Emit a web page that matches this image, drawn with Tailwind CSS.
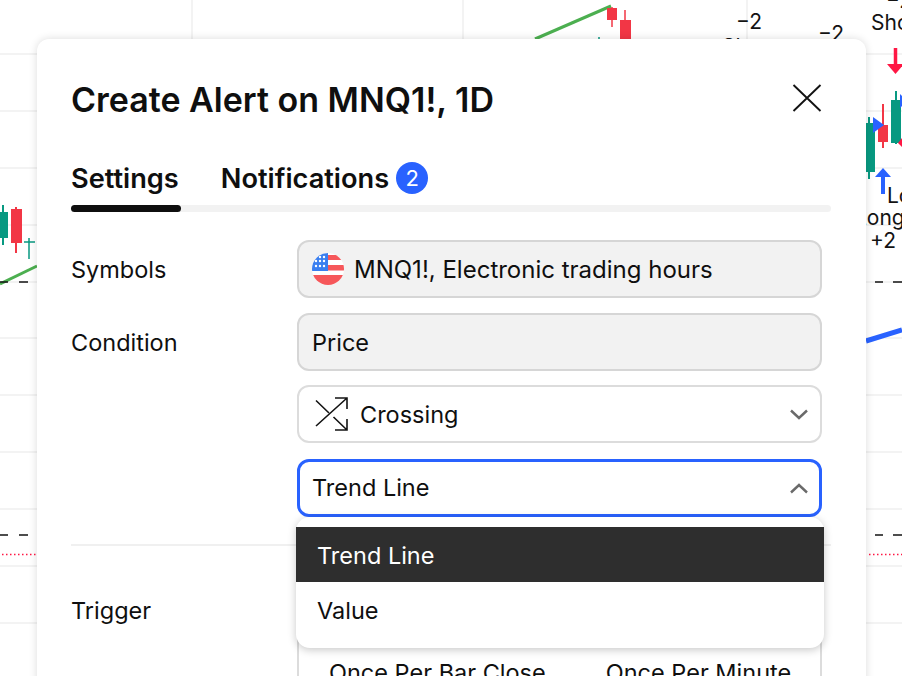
<!DOCTYPE html>
<html lang="en">
<head>
    <meta charset="UTF-8">
    <meta name="viewport" content="width=device-width, initial-scale=1.0">
    <title>Create Alert</title>
    <script src="https://cdn.jsdelivr.net/npm/@tailwindcss/browser@4"></script>
</head>
<body class="bg-white font-['Inter',sans-serif] text-[#0f0f0f]">
    <div class="relative w-[902px] h-[676px] overflow-hidden bg-white">

        <!-- Chart behind the dialog -->
        <svg class="absolute inset-0" width="902" height="676" viewBox="0 0 902 676" fill="none">
            <g stroke="#f0f0f0" stroke-width="1.5">
                <path d="M0 54H902M0 111H902M0 168H902M0 225H902M0 282H902M0 338H902M0 395H902M0 452H902M0 509H902M0 566H902M0 623H902"/>
                <path d="M192 0V54M463 0V54M747 0V54"/>
            </g>
            <!-- left candles -->
            <path d="M3 205V245" stroke="#089981" stroke-width="2"/>
            <rect x="0" y="212" width="8" height="26" fill="#089981"/>
            <path d="M16 207V253" stroke="#f23645" stroke-width="2"/>
            <rect x="11" y="209" width="11" height="34" fill="#f23645"/>
            <path d="M29 238V259M24 242H35" stroke="#089981" stroke-width="1.5"/>
            <path d="M0 284L37 266" stroke="#4caf50" stroke-width="3"/>
            <path d="M0 282H8M19 282H28M0 535H8M19 535H28M875 282H883M893 282H902M875 535H883M893 535H902" stroke="#131313" stroke-width="1.5"/>
            <path d="M2 554.5H37M869 554.5H902" stroke="#ff1744" stroke-width="1.5" stroke-dasharray="1.5 2.500"/>
            <!-- top candles -->
            <path d="M535 39L611 6" stroke="#4caf50" stroke-width="3"/>
            <path d="M612 7V27" stroke="#f23645" stroke-width="1.5"/>
            <rect x="607" y="8" width="10" height="12" fill="#f23645"/>
            <path d="M625 10V22" stroke="#f23645" stroke-width="1.5"/>
            <rect x="620" y="20" width="11" height="20" fill="#f23645"/>
            <path d="M599 37V40" stroke="#089981" stroke-width="1.5"/>
            <!-- right candles -->
            <path d="M869 117V179" stroke="#089981" stroke-width="2"/>
            <rect x="866" y="123" width="9" height="49" fill="#089981"/>
            <path d="M883 104V148" stroke="#f23645" stroke-width="2"/>
            <rect x="878" y="125" width="10" height="17" fill="#f23645"/>
            <path d="M896 91V144" stroke="#089981" stroke-width="2"/>
            <rect x="891" y="100" width="10" height="43" fill="#089981"/>
            <path d="M873 117L873 133L884 125Z" fill="#2962ff"/>
            <path d="M900 94V108L902 106V96Z" fill="#2962ff"/>
            <path d="M902 138L898 143L902 147Z" fill="#ff1744"/>
            <path d="M895.500 48V66" stroke="#ff1744" stroke-width="3.500"/>
            <path d="M887 64H904L895.500 74Z" fill="#ff1744"/>
            <path d="M875 177L883 168L891 177Z" fill="#2962ff"/>
            <path d="M883 176V194" stroke="#2962ff" stroke-width="4"/>
            <path d="M866 341L902 330" stroke="#2962ff" stroke-width="5"/>
            <!-- signal labels -->
            <g fill="#131313" font-family="Inter, sans-serif" font-size="21">
                <text x="736" y="29">−2</text>
                <text x="722" y="54">Short</text>
                <text x="818" y="41">−2</text>
                <text x="886" y="8">−2</text>
                <text x="871" y="30">Sho</text>
                <text x="887" y="203">Lo</text>
                <text x="855" y="225">Long</text>
                <text x="870" y="248">+2</text>
            </g>
        </svg>

        <!-- Dialog -->
        <div class="absolute left-[37px] top-[39px] w-[829px] h-[700px] bg-white rounded-t-[12px] shadow-[0_0_8px_rgba(0,0,0,0.14)] pl-[34px] pr-[35px] pt-[39px]">
            <div class="flex items-start justify-between">
                <h1 class="text-[34px] leading-[44px] font-semibold">Create Alert on MNQ1!, 1D</h1>
                <button class="mr-[9px] mt-[6px]">
                    <svg width="30" height="28" viewBox="0 0 30 28" fill="none" stroke="#131313" stroke-width="1.9"><path d="M1.5 1L28.500 27M28.500 1L1.500 27"/></svg>
                </button>
            </div>

            <div class="flex gap-[42px] mt-[36px] h-[40px] items-center text-[27.2px] font-semibold">
                <span class="pt-[2px]">Settings</span>
                <span class="flex items-center gap-[7px]">
                    <span class="pt-[2px]">Notifications</span>
                    <span class="flex items-center justify-center w-[32px] h-[32px] rounded-full bg-[#2962ff] text-white text-[22px] font-normal">2</span>
                </span>
            </div>
            <div class="mt-[7px] h-[7px] rounded-full bg-[#f2f2f2]">
                <div class="w-[110px] h-[7px] rounded-full bg-[#0f0f0f]"></div>
            </div>

            <div class="mt-[28px] grid grid-cols-[226px_525px] text-[23.5px]">
                <div class="h-[58px] pt-[2px] flex items-center">Symbols</div>
                <div class="h-[58px] flex items-center gap-[10px] pl-[13px] bg-[#f2f2f2] border-2 border-[#d6d6d6] rounded-[12px] text-[24px]">
                    <svg width="32" height="32" viewBox="0 0 32 32">
                        <defs><clipPath id="flag"><circle cx="16" cy="16" r="16"/></clipPath></defs>
                        <g clip-path="url(#flag)">
                            <rect width="32" height="32" fill="#fff"/>
                            <rect x="16" y="2" width="16" height="5" fill="#f6575a"/>
                            <rect x="16" y="12" width="16" height="5.500" fill="#f6575a"/>
                            <rect y="22" width="32" height="10" fill="#f6575a"/>
                            <rect width="16" height="18" fill="#3a7ff0"/>
                            <g fill="#fff">
                                <circle cx="4" cy="8" r="1.200"/><circle cx="8" cy="4" r="1.200"/><circle cx="12" cy="4" r="1.200"/>
                                <circle cx="8" cy="8" r="1.200"/><circle cx="12" cy="8" r="1.200"/>
                                <circle cx="4" cy="13" r="1.200"/><circle cx="8" cy="13" r="1.200"/><circle cx="12" cy="13" r="1.200"/>
                            </g>
                        </g>
                    </svg>
                    <span class="pt-[2px]">MNQ1!, Electronic trading hours</span>
                </div>

                <div class="mt-[15px] h-[58px] pt-[2px] flex items-center">Condition</div>
                <div class="mt-[15px] h-[58px] flex items-center pl-[13px] pt-[2px] bg-[#f2f2f2] border-2 border-[#d6d6d6] rounded-[12px]">Price</div>

                <div class="col-start-2 mt-[14px] h-[58px] flex items-center justify-between pl-[16px] pr-[12px] border-2 border-[#dcdcdc] rounded-[12px]">
                    <span class="flex items-center gap-[11px]">
                        <svg width="34" height="36" viewBox="0 0 34 36" fill="none" stroke="#131313" stroke-width="1.600">
                            <path d="M1 30L32 2M20 2H32V13"/>
                            <path d="M1 4.500L14 17M18.500 21L32 34M20 34H32V23"/>
                        </svg>
                        <span class="pt-[2px]">Crossing</span>
                    </span>
                    <svg width="18" height="11" viewBox="0 0 18 11" fill="none" stroke="#6a6a6a" stroke-width="2.400"><path d="M1 1.500L9 9L17 1.500"/></svg>
                </div>

                <div class="relative col-start-2 mt-[16px] h-[58px] flex items-center justify-between pl-[12px] pr-[11px] border-3 border-[#2962ff] rounded-[12px]">
                    <span>Trend Line</span>
                    <svg width="18" height="11" viewBox="0 0 18 11" fill="none" stroke="#6a6a6a" stroke-width="2.400"><path d="M1 9.500L9 2L17 9.500"/></svg>

                    <!-- Open dropdown -->
                    <div class="absolute z-10 left-[-4px] top-[55px] w-[528px] h-[131px] py-[10px] bg-white rounded-[14px] shadow-[0_2px_8px_rgba(0,0,0,0.22)]">
                        <div class="h-[55px] pt-[2px] flex items-center pl-[21px] bg-[#2e2e2e] text-white">Trend Line</div>
                        <div class="h-[56px] pt-[2px] flex items-center pl-[21px]">Value</div>
                    </div>
                </div>
            </div>

            <div class="mt-[27px] h-[2px] bg-[#f0f0f0]"></div>

            <div class="mt-[35px] grid grid-cols-[226px_525px] text-[23.5px]">
                <div class="h-[58px] pt-[2px] flex items-center">Trigger</div>
                <div class="h-[200px] border-2 border-[#dcdcdc] rounded-[12px]">
                    <div class="mt-[72px] flex pl-[30px] gap-[60px]">
                        <span>Once Per Bar Close</span>
                        <span>Once Per Minute</span>
                    </div>
                </div>
            </div>
        </div>
    </div>
</body>
</html>
